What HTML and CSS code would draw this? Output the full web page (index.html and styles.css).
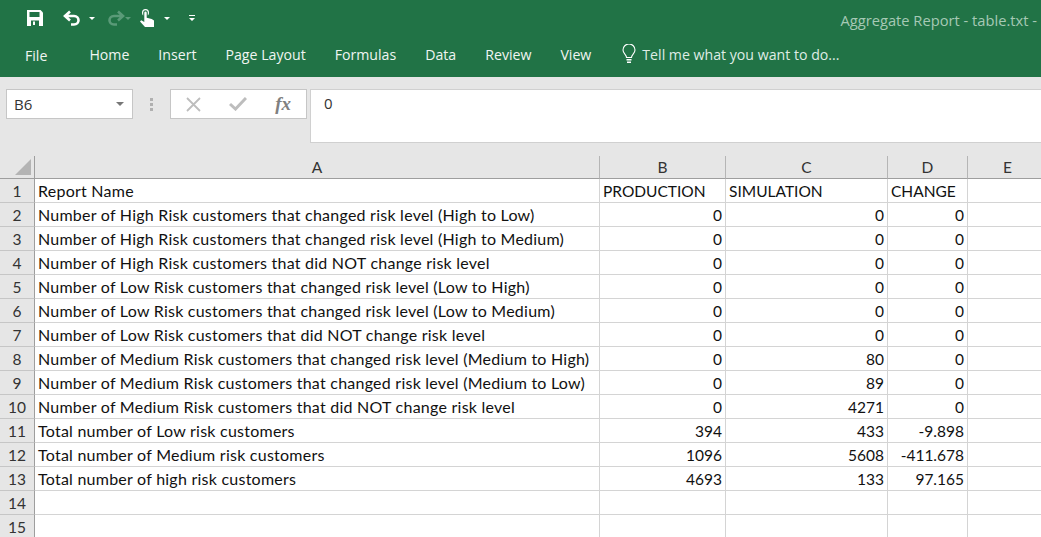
FILE: index.html
```html
<!DOCTYPE html>
<html lang="en">
<head>
<meta charset="utf-8">
<title>Aggregate Report - table.txt</title>
<link rel="stylesheet" href="styles.css">
</head>
<body>
<header class="ribbon">
  <div class="titlebar">
    <svg class="qa save" width="16" height="16" viewBox="0 0 16 16"><path fill="#fff" d="M0 0h13.500L16 2.500V16H0z"/><path fill="#217346" d="M2.500 2h10v5h-10zM4 10.500h8V16H4z"/><path fill="#fff" d="M6 11.500h2V15H6z"/></svg>
    <svg class="qa undo" width="18" height="16" viewBox="0 0 18 16"><path fill="none" stroke="#fff" stroke-width="2.600" d="M7 1.500L2 6l5 4.500M2 6h9c6 0 6 8.500 0 8.500H8"/></svg>
    <svg class="caret" width="6" height="3" viewBox="0 0 6 3"><path fill="#fff" d="M0 0h6L3 3z"/></svg>
    <svg class="qa redo" width="18" height="16" viewBox="0 0 18 16"><path fill="none" stroke="#5a9a78" stroke-width="2.600" d="M11 1.500L16 6l-5 4.500M16 6H7c-6 0-6 8.500 0 8.500h3"/></svg>
    <svg class="caret dim" width="6" height="3" viewBox="0 0 6 3"><path fill="#5a9a78" d="M0 0h6L3 3z"/></svg>
    <svg class="qa touch" width="14" height="18" viewBox="0 0 14 18"><path fill="#fff" d="M2 3.500a3.500 3.500 0 0 1 7 0c0 1.300-.4 2.200-1.200 3V3.500a2.300 2.300 0 0 0-4.600 0v3C2.400 5.700 2 4.800 2 3.500zM4.300 3.800a1.200 1.200 0 0 1 2.400 0v5l5 1.200 2.300 1.500V18H5L0 12.500l1.200-1.200 3.100 1.700z"/></svg>
    <svg class="caret touchcaret" width="6" height="3" viewBox="0 0 6 3"><path fill="#fff" d="M0 0h6L3 3z"/></svg>
    <svg class="more" width="6" height="6" viewBox="0 0 6 6"><path fill="#fff" d="M0 0h6v1H0zM0 3h6L3 6z"/></svg>
    <span class="doc-title">Aggregate Report - table.txt -</span>
  </div>
  <nav class="tabs">
    <span class="tab file">File</span>
    <span class="tab">Home</span>
    <span class="tab">Insert</span>
    <span class="tab">Page Layout</span>
    <span class="tab">Formulas</span>
    <span class="tab">Data</span>
    <span class="tab">Review</span>
    <span class="tab view">View</span>
    <span class="tell">
      <svg width="14" height="20" viewBox="0 0 14 20"><path fill="none" stroke="#fff" stroke-width="1.100" d="M4.500 13.500C4.500 10.500 1 9.500 1 6a6 6 0 0 1 12 0c0 3.500-3.500 4.500-3.500 7.500z"/><path fill="#fff" d="M4.500 15h5v1.500h-5zM5 17.500h4V19H5z"/></svg>
      Tell me what you want to do...
    </span>
  </nav>
</header>

<section class="formula-area">
  <div class="namebox">B6<svg width="8" height="4" viewBox="0 0 8 4"><path fill="#777" d="M0 0h8L4 4z"/></svg></div>
  <div class="grip"><i></i><i></i><i></i></div>
  <div class="fx-buttons">
    <svg width="15" height="15" viewBox="0 0 15 15"><path stroke="#bdbdbd" stroke-width="1.800" d="M1 1l13 13M14 1L1 14"/></svg>
    <svg width="18" height="14" viewBox="0 0 18 14"><path fill="none" stroke="#bdbdbd" stroke-width="3" d="M1 7l5.500 5L17 1"/></svg>
    <span class="fx">fx</span>
  </div>
  <div class="formula-input">0</div>
</section>

<main class="sheet">
  <div class="corner"><svg width="16" height="16" viewBox="0 0 16 16"><path fill="#b4b4b4" d="M16 0v16H0z"/></svg></div>
  <div class="colhead">A</div><div class="colhead">B</div><div class="colhead">C</div><div class="colhead">D</div><div class="colhead">E</div>

  <div class="rowhead">1</div><div class="cell label">Report Name</div><div class="cell">PRODUCTION</div><div class="cell">SIMULATION</div><div class="cell">CHANGE</div><div class="cell"></div>
  <div class="rowhead">2</div><div class="cell label">Number of High Risk customers that changed risk level (High to Low)</div><div class="cell num">0</div><div class="cell num">0</div><div class="cell num">0</div><div class="cell"></div>
  <div class="rowhead">3</div><div class="cell label">Number of High Risk customers that changed risk level (High to Medium)</div><div class="cell num">0</div><div class="cell num">0</div><div class="cell num">0</div><div class="cell"></div>
  <div class="rowhead">4</div><div class="cell label">Number of High Risk customers that did NOT change risk level</div><div class="cell num">0</div><div class="cell num">0</div><div class="cell num">0</div><div class="cell"></div>
  <div class="rowhead">5</div><div class="cell label">Number of Low Risk customers that changed risk level (Low to High)</div><div class="cell num">0</div><div class="cell num">0</div><div class="cell num">0</div><div class="cell"></div>
  <div class="rowhead">6</div><div class="cell label">Number of Low Risk customers that changed risk level (Low to Medium)</div><div class="cell num">0</div><div class="cell num">0</div><div class="cell num">0</div><div class="cell"></div>
  <div class="rowhead">7</div><div class="cell label">Number of Low Risk customers that did NOT change risk level</div><div class="cell num">0</div><div class="cell num">0</div><div class="cell num">0</div><div class="cell"></div>
  <div class="rowhead">8</div><div class="cell label">Number of Medium Risk customers that changed risk level (Medium to High)</div><div class="cell num">0</div><div class="cell num">80</div><div class="cell num">0</div><div class="cell"></div>
  <div class="rowhead">9</div><div class="cell label">Number of Medium Risk customers that changed risk level (Medium to Low)</div><div class="cell num">0</div><div class="cell num">89</div><div class="cell num">0</div><div class="cell"></div>
  <div class="rowhead">10</div><div class="cell label">Number of Medium Risk customers that did NOT change risk level</div><div class="cell num">0</div><div class="cell num">4271</div><div class="cell num">0</div><div class="cell"></div>
  <div class="rowhead">11</div><div class="cell label">Total number of Low risk customers</div><div class="cell num">394</div><div class="cell num">433</div><div class="cell num">-9.898</div><div class="cell"></div>
  <div class="rowhead">12</div><div class="cell label">Total number of Medium risk customers</div><div class="cell num">1096</div><div class="cell num">5608</div><div class="cell num">-411.678</div><div class="cell"></div>
  <div class="rowhead">13</div><div class="cell label">Total number of high risk customers</div><div class="cell num">4693</div><div class="cell num">133</div><div class="cell num">97.165</div><div class="cell"></div>
  <div class="rowhead">14</div><div class="cell"></div><div class="cell"></div><div class="cell"></div><div class="cell"></div><div class="cell"></div>
  <div class="rowhead">15</div><div class="cell"></div><div class="cell"></div><div class="cell"></div><div class="cell"></div><div class="cell"></div>
</main>
</body>
</html>
```
FILE: styles.css
```css
* { box-sizing: border-box; }
html, body { margin: 0; height: 100%; overflow: hidden; }
body { width: 1041px; height: 537px; background: #fff; color: #111; font-family: "Open Sans", "Noto Sans", sans-serif; font-size: 14px; }

.ribbon { background: #217346; height: 77px; color: #fff; }
.titlebar { height: 36px; display: flex; align-items: center; padding-left: 27px; position: relative; }
.qa { flex: none; }
.save { margin-right: 20px; }
.undo { margin-right: 8px; }
.caret { margin-right: 12px; }
.caret.dim { margin-right: 9px; }
.touch { margin-right: 10px; margin-top: -1px; }
.touchcaret { margin-right: 19px; }
.doc-title { margin-left: auto; padding-right: 4px; padding-top: 3px; color: #a6c9b5; white-space: nowrap; font-size: 14.700px; }

.tabs { height: 41px; display: flex; align-items: center; padding-left: 25px; font-size: 14.150px; color: #f0f5f2; padding-bottom: 5px; }
.tab { margin-right: 29px; white-space: nowrap; }
.tab.file { margin-right: 42px; padding-top: 2px; }
.tab.view { margin-right: 31px; }
.tell { display: flex; align-items: center; gap: 6px; white-space: nowrap; color: #dfece5; }

.formula-area { height: 79px; background: #e6e6e6; display: flex; align-items: flex-start; padding: 12px 0 0 6px; }
.namebox { width: 127px; height: 30px; background: #fff; border: 1px solid #c6c6c6; display: flex; align-items: center; justify-content: space-between; padding: 0 8px 0 7px; font-size: 15px; color: #333; }
.grip { width: 37px; height: 30px; display: flex; flex-direction: column; align-items: center; justify-content: center; gap: 2px; }
.grip i { width: 3px; height: 3px; background: #b0b0b0; display: block; }
.fx-buttons { width: 137px; height: 30px; background: #fff; border: 1px solid #c6c6c6; display: flex; align-items: center; padding: 0 15px 0 15px; justify-content: space-between; }
.fx { font-family: "Liberation Serif", serif; font-style: italic; font-weight: bold; font-size: 19px; color: #808080; }
.formula-input { flex: 1; height: 54px; margin-left: 3px; background: #fff; border: 1px solid #d0d0d0; border-right: 0; padding: 3px 0 0 13px; font-size: 15px; color: #333; }

.sheet { display: grid; grid-template-columns: 35px 565px 126px 162px 80px 80px; grid-template-rows: 23px repeat(15, 24px); font-family: Lato, "Open Sans", sans-serif; }
.corner { background: #e6e6e6; border-bottom: 1px solid #9e9e9e; border-right: 1px solid #9e9e9e; display: flex; align-items: flex-end; justify-content: flex-end; padding: 0 3px 3px 0; }
.colhead { background: #e6e6e6; border-right: 1px solid #b5b5b5; border-bottom: 1px solid #9e9e9e; text-align: center; font-size: 15.500px; line-height: 23px; color: #333; }
.rowhead { background: #e6e6e6; border-right: 1px solid #9e9e9e; border-bottom: 1px solid #c6c6c6; text-align: center; font-size: 15.500px; line-height: 24px; color: #333; }
.cell { border-right: 1px solid #d4d4d4; border-bottom: 1px solid #d4d4d4; padding: 0 3px; line-height: 24px; white-space: nowrap; font-size: 15.500px; }
.cell.label { font-size: 16px; letter-spacing: 0.240px; }
.cell.num { text-align: right; }
```
